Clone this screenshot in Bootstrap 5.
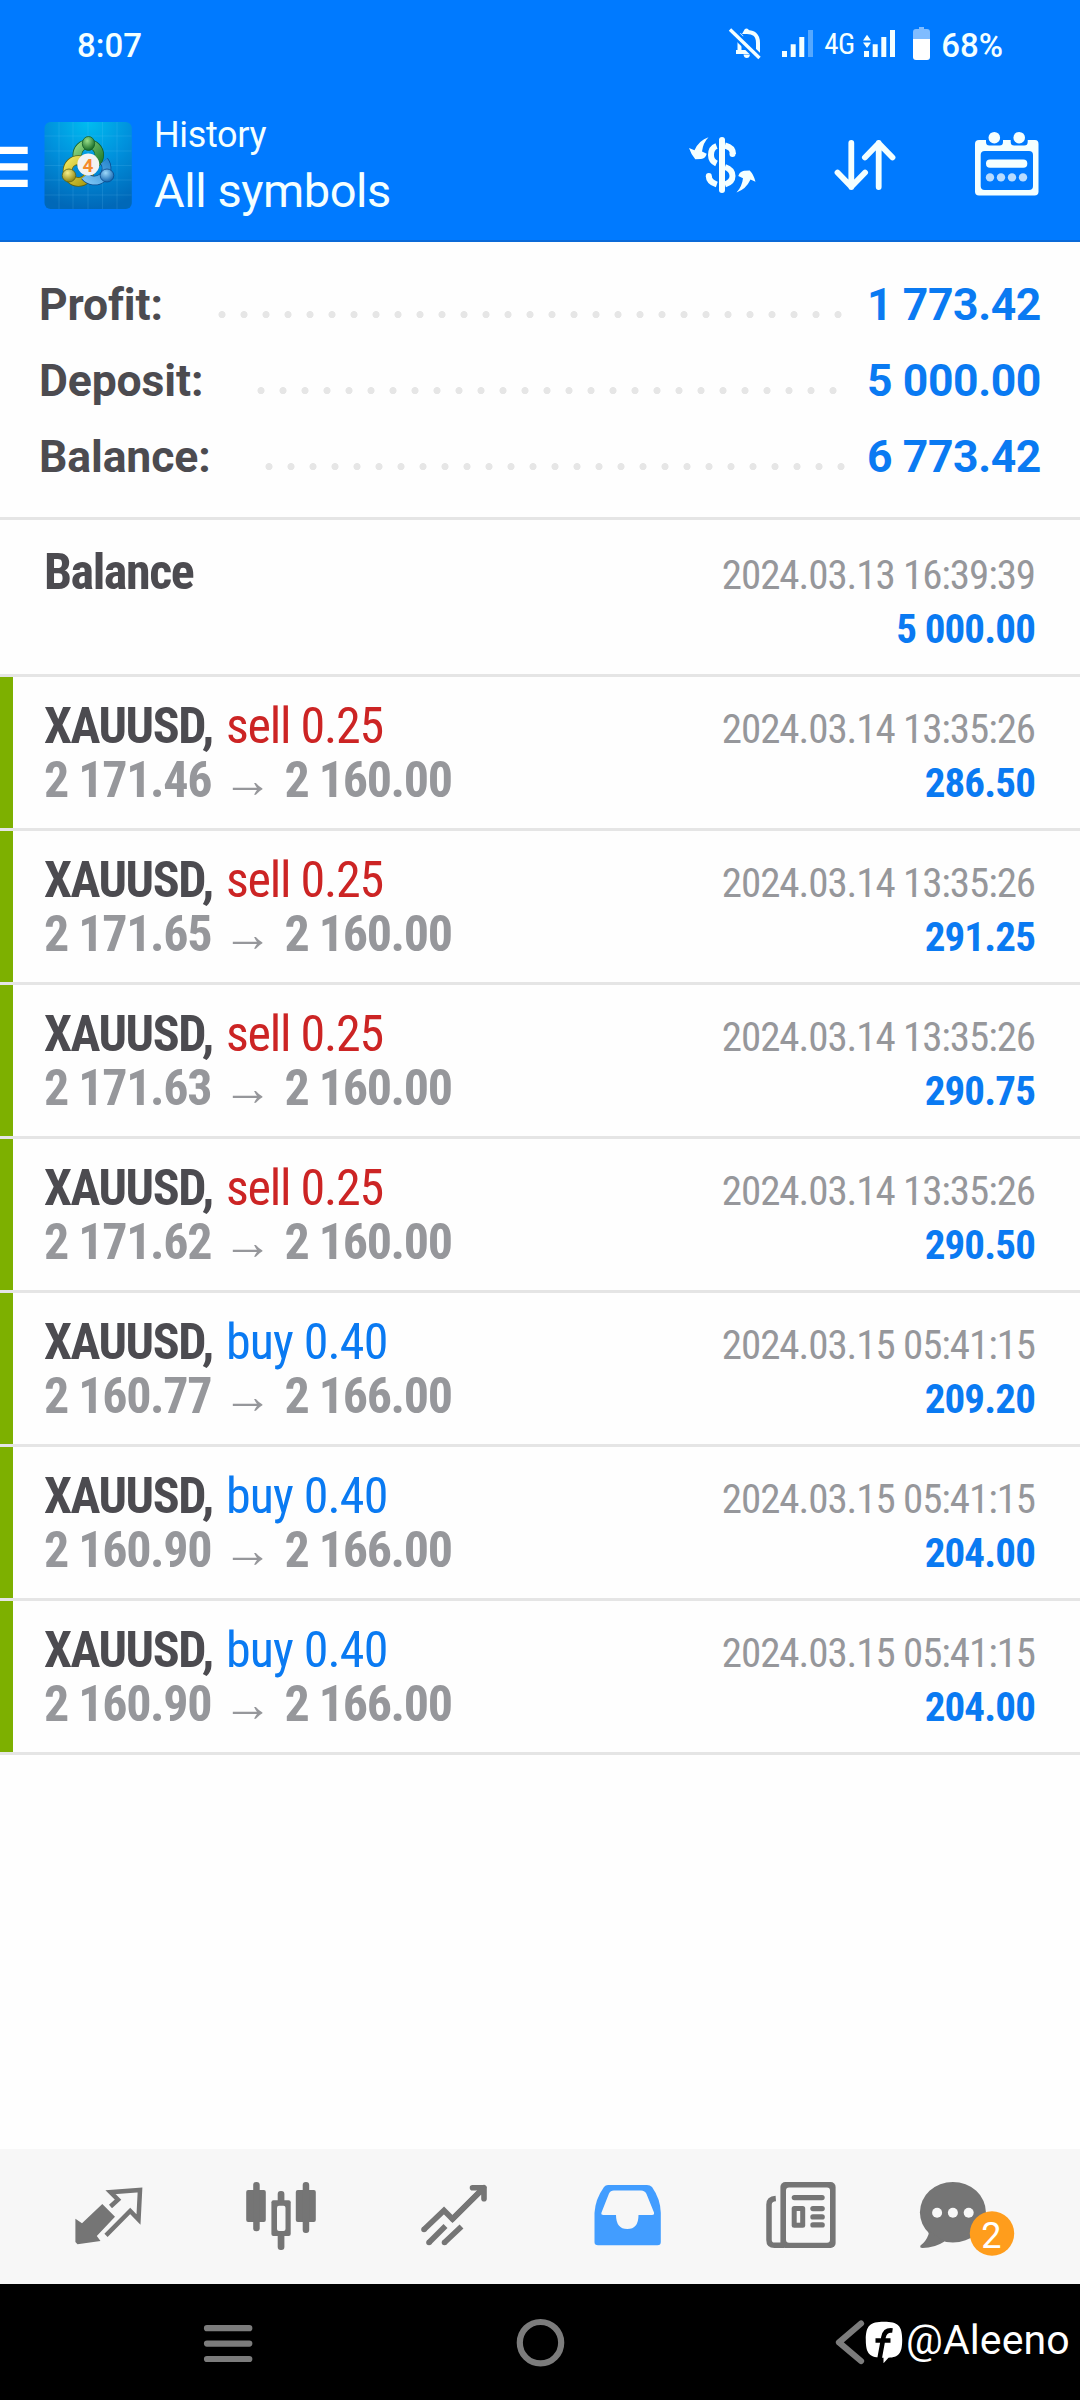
<!DOCTYPE html>
<html lang="en">
<head>
<meta charset="utf-8">
<meta name="viewport" content="width=device-width, initial-scale=1">
<title>History</title>
<link href="https://cdn.jsdelivr.net/npm/bootstrap@5.3.0/dist/css/bootstrap.min.css" rel="stylesheet">
<style>
body{font-family:Roboto,sans-serif;background:#fefefe;color:#4c4b50}
.screen{width:1080px;height:2400px;overflow:hidden}
svg{display:block;flex:none}
.blue-top{background:#007aff;color:#f4ffff;border-bottom:2px solid #0a6ad8;height:242px}
.status-bar{height:91px;line-height:91px;font-size:33px;font-weight:500;padding-left:77px;padding-right:77px}
.net-label{font-family:"Roboto Condensed",Roboto,sans-serif;font-size:29px;font-weight:400;line-height:88px;width:38px;letter-spacing:-.5px}
.app-bar{height:149px}
.heads{padding:22px 0 0 21px}
.head-sub{font-size:36px;line-height:44px;letter-spacing:-.35px}
.head-main{font-size:47px;line-height:56px;margin-top:6px;letter-spacing:-.45px}
.summary{padding:25px 39px 22px 39px;border-bottom:3px solid #e5e5e5;font-size:44.5px;font-weight:700;line-height:76px}
.summary .value,.deal .value{color:#0a7af2}
.summary .value{letter-spacing:-.4px}
.summary .title{letter-spacing:-.12px}
.leader{height:76px;background:radial-gradient(circle 4px at 11px 47.6px,#e6e6e6 3.2px,transparent 3.9px) 0 0/22px 76px repeat-x}
.deal{height:154px;border-bottom:3px solid #e5e5e5;padding:22px 45px 0 44px;background:linear-gradient(#7db000,#7db000) 0 0/13px 100% no-repeat;background-clip:padding-box;font-family:"Roboto Condensed",Roboto,sans-serif;line-height:54px}
.deal.plain{height:157px;padding-top:25px;background:none}
.deal .sym,.deal .prices{font-size:50px;font-weight:700;white-space:pre}
.deal .sym{letter-spacing:-1.45px}
.deal .prices{color:#96979b;letter-spacing:-1.3px}
.deal .arrow{margin:0 2.8px 0 1.3px}
.deal .side{font-weight:400;margin-left:3px}
.deal .sell{color:#cc2424;letter-spacing:-1.2px}
.deal .buy{color:#0a7af2;letter-spacing:-.85px}
.deal .stamp{font-size:41px;color:#96979b;margin-top:3px;letter-spacing:-1.07px}
.deal .value{font-size:41px;font-weight:700;letter-spacing:-.86px}
.tabs{background:#f7f7f7;height:135px;padding:0 21px}
.sys-nav{background:#000;height:116px;color:#fff;font-size:41px;line-height:112px;letter-spacing:.1px}
</style>
</head>
<body>
<main class="screen d-flex flex-column">
<header class="blue-top flex-shrink-0">
  <div class="status-bar d-flex align-items-start">
    <span class="me-auto">8:07</span>
    <svg width="100" height="91" viewBox="724 0 100 91" fill="#f4ffff"><path d="M736 52h24M739.500 51V41q0-4 2.500-6.500M745 32q13-1 13 11v9" fill="none" stroke="#f4ffff" stroke-width="4"/><path d="M742 34l2-3.500a2.600 2.600 0 0 1 5 0l3 3.500zM743.500 54.500h6.500q-.500 3.500-3.200 3.500t-3.300-3.500z"/><path d="M730 29.500l29.500 28.500" stroke="#007aff" stroke-width="8"/><path d="M730 29.500l29.500 28.500" stroke="#f4ffff" stroke-width="3.400"/><path d="M782 51h5v6h-5zM790.700 44.300h5V57h-5zM799.300 37h5v20h-5z"/><path d="M808 30h5v27h-5z" opacity=".35"/></svg>
    <span class="net-label">4G</span>
    <svg width="79" height="91" viewBox="862 0 79 91" fill="#f4ffff"><path d="M864 51h5v6h-5zM872.700 44.300h5V57h-5zM881.300 37h5v20h-5zM890 30h5v27h-5zM863 40.500l4-5.800 4 5.800zM863 42.500l4 5.500 4-5.500z"/><path d="M913 39V32q0-3 3-3h3v-2h5v2h3q3 0 3 3v7z" fill="#80bcff"/><path d="M913 39h17v18q0 3-3 3h-11q-3 0-3-3z" fill="#fff"/></svg>
    <span>68%</span>
  </div>
  <div class="app-bar d-flex">
    <svg width="133" height="149" viewBox="0 91 133 149">
      <defs>
        <radialGradient id="bg" cx=".5" cy="0" r="1"><stop offset="0" stop-color="#00bcf0"/><stop offset=".5" stop-color="#0090dc"/><stop offset="1" stop-color="#0068b8"/></radialGradient>
        <linearGradient id="gr" x1="0" y1="0" x2="1" y2="1"><stop offset="0" stop-color="#8fd680"/><stop offset="1" stop-color="#1c7a2a"/></linearGradient>
        <linearGradient id="ye" x1="0" y1="0" x2="1" y2="1"><stop offset="0" stop-color="#eee45c"/><stop offset="1" stop-color="#a89a10"/></linearGradient>
        <linearGradient id="bl" x1="1" y1="0" x2="0" y2="1"><stop offset="0" stop-color="#2c8ad0"/><stop offset="1" stop-color="#7cc4f4"/></linearGradient>
        <radialGradient id="hg" cx=".4" cy=".3" r=".7"><stop offset="0" stop-color="#9be08a"/><stop offset="1" stop-color="#146a26"/></radialGradient>
        <radialGradient id="hy" cx=".4" cy=".3" r=".7"><stop offset="0" stop-color="#f6f08a"/><stop offset="1" stop-color="#8e8410"/></radialGradient>
        <radialGradient id="hb" cx=".4" cy=".3" r=".7"><stop offset="0" stop-color="#9cd8fa"/><stop offset="1" stop-color="#1466b0"/></radialGradient>
      </defs>
      <path d="M0 146.700h27.700v7.300H0zM0 163.200h27.700v7.300H0zM0 179.700h27.700v7.300H0z" fill="#fff"/>
      <rect x="44.500" y="122" width="87.300" height="87" rx="6" fill="url(#bg)"/>
      <path d="M59 122v87M73 122v87M88 122v87M102.500 122v87M117 122v87M44.500 136h87M44.500 151h87M44.500 165.500h87M44.500 180h87M44.500 195h87" stroke="#7fd8ff" stroke-opacity=".14" fill="none"/>
      <g fill="none">
        <circle cx="88.300" cy="155" r="11" stroke="#14602a" stroke-width="9.500"/><circle cx="88.300" cy="155" r="11" stroke="url(#gr)" stroke-width="8"/>
        <circle cx="78.500" cy="171" r="11" stroke="#5e6414" stroke-width="9.500"/><circle cx="78.500" cy="171" r="11" stroke="url(#ye)" stroke-width="8"/>
        <path d="M104 161a11.500 11.500 0 1 1-19 15" stroke="#0c4a8c" stroke-width="9.500"/><path d="M104 161a11.500 11.500 0 1 1-19 15" stroke="url(#bl)" stroke-width="8"/>
      </g>
      <ellipse cx="88.500" cy="143.500" rx="6.200" ry="7" fill="url(#hg)" stroke="#14602a" stroke-width=".8"/>
      <ellipse cx="69" cy="175.500" rx="6.800" ry="6.500" fill="url(#hy)" stroke="#5e6414" stroke-width=".8"/>
      <ellipse cx="107" cy="175.500" rx="6.800" ry="6.500" fill="url(#hb)" stroke="#0c4a8c" stroke-width=".8"/>
      <circle cx="88.300" cy="164.500" r="11" fill="#f2f2f2"/>
      <text x="88" y="171.500" font-size="19" font-weight="700" fill="#f58a2c" text-anchor="middle">4</text>
    </svg>
    <div class="heads me-auto"><div class="head-sub">History</div><div class="head-main">All symbols</div></div>
    <svg width="80" height="149" viewBox="680 91 80 149" fill="#f4ffff"><path d="M719 139.500h6v50.500h-6z"/><circle cx="722" cy="140" r="3"/><circle cx="722" cy="190" r="3"/><path d="M716.500 146q-5.500 2-5.500 9 0 6 5.500 8.500M725 145.500q8 2 8 8.500" fill="none" stroke="#f4ffff" stroke-width="6"/><circle cx="732.500" cy="154" r="3"/><path d="M725 167q7.500 2.500 7.500 9 0 6-7.500 8.500M708.800 176q0 6 8 8.500" fill="none" stroke="#f4ffff" stroke-width="6"/><circle cx="708.800" cy="176" r="3"/><path d="M708.500 137.300Q703 143 702 151.500l4.700 2.200q-1.200 4.800-5.700 5.300l-5.700.3q-4-4.300-6.300-11.300l5.500 2.200q4.500-9.800 14-12.900zM736.500 192.500q5.500-5.700 6.500-14.200l-4.700-2.200q1.200-4.300 5.700-5.300l5.700-.3q4 4 5.800 11.300l-5-2.200q-4.500 9.800-14 12.900z"/></svg>
    <svg width="180" height="149" viewBox="760 91 180 149"><path d="M851.300 143v44M837.500 172.500l13.800 14.300 13.800-14.300M878.700 187V143M864.900 157.500l13.800-14.300 13.800 14.300" fill="none" stroke="#f4ffff" stroke-width="5.800" stroke-linecap="round" stroke-linejoin="round"/></svg>
    <svg width="140" height="149" viewBox="940 91 140 149"><path d="M979 140h56q3.500 0 3.500 4v47.500q0 4-4 4h-55.500q-4 0-4-4V144q0-4 4-4z" fill="#f4ffff"/><rect x="980.700" y="151" width="52.300" height="39" rx="4" fill="#007aff"/><path d="M986 137h17v5q0 3.500-3.500 3.500h-10q-3.500 0-3.500-3.500zM1010.700 137h17v5q0 3.500-3.500 3.500h-10q-3.500 0-3.500-3.500z" fill="#007aff"/><g fill="#f4ffff"><circle cx="994.300" cy="137.700" r="5.800"/><circle cx="1019.200" cy="137.700" r="5.800"/><rect x="986" y="159.500" width="41.300" height="8.200" rx="4"/></g><g fill="#b8dcff"><circle cx="990" cy="177.400" r="4.200"/><circle cx="1001" cy="177.400" r="4.200"/><circle cx="1012" cy="177.400" r="4.200"/><circle cx="1023" cy="177.400" r="4.200"/></g></svg>
  </div>
</header>

<section class="summary flex-shrink-0">
  <div class="d-flex"><span class="title">Profit:</span><span class="leader" style="width:638px;margin-left:48px"></span><span class="value ms-auto">1 773.42</span></div>
  <div class="d-flex"><span class="title">Deposit:</span><span class="leader" style="width:594px;margin-left:47px"></span><span class="value ms-auto">5 000.00</span></div>
  <div class="d-flex"><span class="title">Balance:</span><span class="leader" style="width:594px;margin-left:47px"></span><span class="value ms-auto">6 773.42</span></div>
</section>

<section class="flex-grow-1">
  <article class="deal plain d-flex justify-content-between"><div><div class="sym">Balance</div></div><div class="text-end"><div class="stamp">2024.03.13 16:39:39</div><div class="value">5 000.00</div></div></article>
  <article class="deal d-flex justify-content-between"><div><div class="sym">XAUUSD, <span class="side sell">sell 0.25</span></div><div class="prices">2 171.46 <span class="arrow">→</span> 2 160.00</div></div><div class="text-end"><div class="stamp">2024.03.14 13:35:26</div><div class="value">286.50</div></div></article>
  <article class="deal d-flex justify-content-between"><div><div class="sym">XAUUSD, <span class="side sell">sell 0.25</span></div><div class="prices">2 171.65 <span class="arrow">→</span> 2 160.00</div></div><div class="text-end"><div class="stamp">2024.03.14 13:35:26</div><div class="value">291.25</div></div></article>
  <article class="deal d-flex justify-content-between"><div><div class="sym">XAUUSD, <span class="side sell">sell 0.25</span></div><div class="prices">2 171.63 <span class="arrow">→</span> 2 160.00</div></div><div class="text-end"><div class="stamp">2024.03.14 13:35:26</div><div class="value">290.75</div></div></article>
  <article class="deal d-flex justify-content-between"><div><div class="sym">XAUUSD, <span class="side sell">sell 0.25</span></div><div class="prices">2 171.62 <span class="arrow">→</span> 2 160.00</div></div><div class="text-end"><div class="stamp">2024.03.14 13:35:26</div><div class="value">290.50</div></div></article>
  <article class="deal d-flex justify-content-between"><div><div class="sym">XAUUSD, <span class="side buy">buy 0.40</span></div><div class="prices">2 160.77 <span class="arrow">→</span> 2 166.00</div></div><div class="text-end"><div class="stamp">2024.03.15 05:41:15</div><div class="value">209.20</div></div></article>
  <article class="deal d-flex justify-content-between"><div><div class="sym">XAUUSD, <span class="side buy">buy 0.40</span></div><div class="prices">2 160.90 <span class="arrow">→</span> 2 166.00</div></div><div class="text-end"><div class="stamp">2024.03.15 05:41:15</div><div class="value">204.00</div></div></article>
  <article class="deal d-flex justify-content-between"><div><div class="sym">XAUUSD, <span class="side buy">buy 0.40</span></div><div class="prices">2 160.90 <span class="arrow">→</span> 2 166.00</div></div><div class="text-end"><div class="stamp">2024.03.15 05:41:15</div><div class="value">204.00</div></div></article>
</section>

<nav class="tabs d-flex flex-shrink-0">
  <svg width="173" height="135" viewBox="21 2149 173 135" fill="#757575"><path d="M75.400 2218.700l6.600 4.600 20.300-19.300 12.700 12.700-18.200 19.300 3.700 5-23 3.300-2.100-2.300z"/><path d="M106 2235.300l24.200-24.300 8.300 8.500 1.500-29.500-29.500 2.200 7.500 7.500-7.500 6.800" fill="none" stroke="#757575" stroke-width="4.500"/></svg>
  <svg width="173" height="135" viewBox="194 2149 173 135" fill="#757575"><rect x="246.200" y="2190" width="19.600" height="32" rx="2"/><rect x="253.200" y="2182" width="6.500" height="49.300" rx="3"/><rect x="295.800" y="2190" width="20" height="32" rx="2"/><rect x="302.700" y="2182" width="6.500" height="51" rx="3"/><rect x="277.700" y="2191" width="6.700" height="59" rx="3"/><rect x="271.400" y="2200.300" width="19.300" height="35.700" rx="2"/><rect x="277" y="2205.700" width="8.500" height="25.300" rx="2" fill="#f7f7f7"/></svg>
  <svg width="173" height="135" viewBox="367 2149 173 135" fill="none" stroke="#757575" stroke-width="5.600"><g stroke-linecap="round" stroke-linejoin="round"><path d="M472.500 2187.700h11.500v11M484 2187.700l-31.500 31.300"/></g><path d="M424 2229.500l20-19 8.500 8.500 30-30M429 2242.500l16.500-16.500M444.500 2242.500l17-16" stroke-linejoin="miter"/><g fill="#757575" stroke="none"><circle cx="424" cy="2229.500" r="2.800"/><circle cx="429" cy="2242.500" r="2.800"/><circle cx="444.500" cy="2242.500" r="2.800"/></g></svg>
  <svg width="173" height="135" viewBox="540 2149 173 135"><path d="M594.500 2213q.800-14 9.500-26 1.500-2 4-2h39q3 0 5 2 8.500 12 8.800 26v29q0 3.300-3.300 3.300H598q-3.500 0-3.500-3.300z" fill="#429dff"/><path d="M614 2190.500h27q4 0 5.500 3.500l7.500 18.500q.500 2.500-2 2.500h-13.500q0 14-11.200 14t-11.300-14h-12.500q-2.800 0-2-2.500l7.500-19q1.300-3 5-3z" fill="#f7f7f7"/></svg>
  <svg width="173" height="135" viewBox="713 2149 173 135" fill="#757575"><path d="M775.800 2198.500q-6.800.5-6.800 6V2240q0 5.300 5.500 5.300h10" fill="none" stroke="#757575" stroke-width="5.500"/><rect x="780.400" y="2182" width="55.200" height="66" rx="5"/><rect x="786" y="2187.400" width="44" height="55.300" rx="3" fill="#f7f7f7"/><rect x="791.700" y="2195" width="33" height="5.200" rx="2.600"/><rect x="791.700" y="2206" width="13.500" height="21.700" rx="2.500"/><rect x="796.700" y="2211" width="3.500" height="11.700" fill="#f7f7f7"/><rect x="810.300" y="2206" width="14.500" height="5.200" rx="2.600"/><rect x="810.300" y="2214.200" width="14.500" height="5.300" rx="2.600"/><rect x="810.300" y="2222.300" width="14.500" height="5.300" rx="2.600"/></svg>
  <svg width="173" height="135" viewBox="886 2149 173 135" fill="#757575"><ellipse cx="952.900" cy="2212.300" rx="33" ry="30.300"/><path d="M926 2229q3.500 2.500 2.500 5.500-2.500 7-8 11-1 2.500 2 2.500 12 0 22-6.500z"/><g fill="#f7f7f7"><circle cx="937.100" cy="2212.800" r="5"/><circle cx="952.900" cy="2212.800" r="5"/><circle cx="968.700" cy="2212.800" r="5"/></g><circle cx="992" cy="2233.500" r="22.200" fill="#ff9d1c"/><text x="991.300" y="2247.700" font-size="36" fill="#fff" text-anchor="middle">2</text></svg>
</nav>
<footer class="sys-nav d-flex flex-shrink-0">
  <svg width="906" height="116" viewBox="0 2284 906 116" fill="none" stroke="#7c7c7c" stroke-width="6.200" stroke-linecap="round"><path d="M207 2328.200h42.300M207 2343.600h42.300M207 2359h42.300"/><circle cx="540.500" cy="2342.700" r="20.700"/><path d="M861 2323.500l-22 18.900 22 18.600" stroke-linejoin="round"/><path d="M884 2321.700c14 0 18.200 4 18.200 18s-3.700 17.500-13.700 18l-5 5.600v-5.600c-14 0-17.700-4-17.700-18s4.200-18 18.200-18z" fill="#fff" stroke="none"/><path d="M892.500 2330.500q-7.500-1-9 6.500l-4 22M875.500 2340.500h15" stroke="#000" stroke-width="4.600" stroke-linecap="butt"/></svg>
  <span>@Aleeno</span>
</footer>
</main>
<script src="https://cdn.jsdelivr.net/npm/bootstrap@5.3.0/dist/js/bootstrap.bundle.min.js"></script>
</body>
</html>
